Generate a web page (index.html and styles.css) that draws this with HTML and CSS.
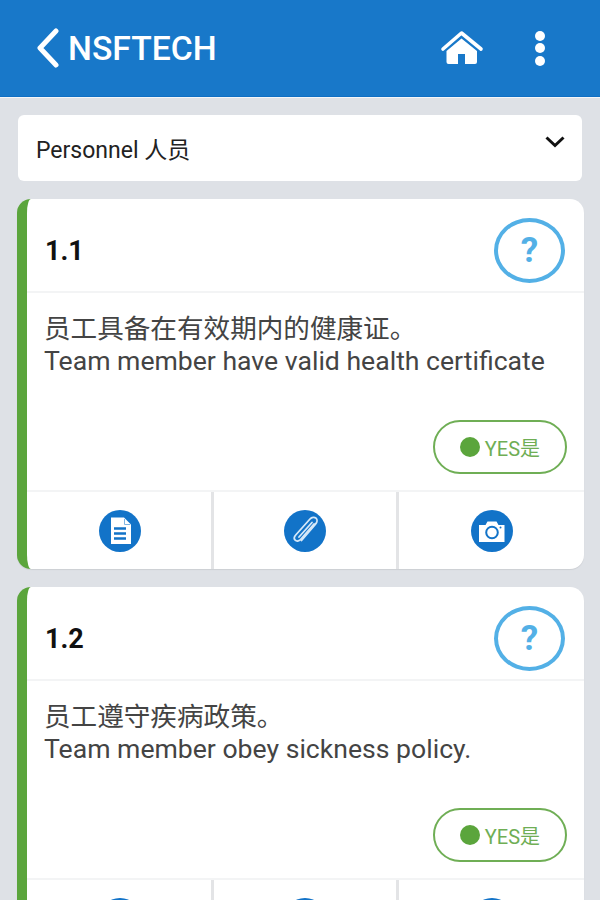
FILE: index.html
```html
<!DOCTYPE html>
<html lang="zh">
<head>
    <meta charset="UTF-8">
    <title>NSFTECH</title>
    <link rel="stylesheet" href="styles.css">
</head>
<body>
    <svg class="defs" width="0" height="0">
        <symbol id="i-doc" viewBox="0 0 42 42">
            <circle cx="21" cy="21" r="21" fill="#1273c8"/>
            <path d="M12 7.500h13l7 7v19.500H12z" fill="#fff"/>
            <path d="M25.500 9v5.500H31" fill="none" stroke="#7fb4e2" stroke-width="1"/>
            <path d="M15 18.500h12M15 23.500h12M15 28.500h12" stroke="#1273c8" stroke-width="2.400"/>
        </symbol>
        <symbol id="i-clip" viewBox="0 0 42 42">
            <circle cx="21" cy="21" r="21" fill="#1273c8"/>
            <path d="M30 14 16.500 29.500c-1.500 1.800-4 2-5.300.700s-1-3.500.500-5.200L26 9c1.800-2 4.500-2.200 6-.800s1.300 4-.500 6L17.500 30.500" fill="none" stroke="#d6e8f8" stroke-width="1.800" stroke-linecap="round"/>
            <path d="M28 12.500 15 27" fill="none" stroke="#d6e8f8" stroke-width="1.800" stroke-linecap="round"/>
        </symbol>
        <symbol id="i-cam" viewBox="0 0 42 42">
            <circle cx="21" cy="21" r="21" fill="#1273c8"/>
            <path d="M8 15h6.500l2-3.500h9l2 3.500H33.500v17H8z" fill="#fff"/>
            <circle cx="21" cy="22.500" r="5.800" fill="none" stroke="#1273c8" stroke-width="2"/>
            <circle cx="29.500" cy="17.500" r="1" fill="#1273c8"/>
        </symbol>
    </svg>

    <header class="topbar">
        <div class="brand">
            <svg class="back" viewBox="0 0 26 40" width="26" height="40"><path d="M21 3 5 20l16 17" fill="none" stroke="#fff" stroke-width="5" stroke-linecap="round" stroke-linejoin="round"/></svg>
            <span>NSFTECH</span>
        </div>
        <div class="actions">
            <svg class="home" viewBox="0 0 44 38" width="44" height="38">
                <path d="M3 20 21.500 4 41 20" fill="none" stroke="#fff" stroke-width="3.600" stroke-linecap="round" stroke-linejoin="round"/>
                <path d="M6.500 22 21.500 9.500 37 22v11a2 2 0 0 1-2 2H25V25h-7v10H8.500a2 2 0 0 1-2-2z" fill="#fff"/>
            </svg>
            <div class="dots"><i></i><i></i><i></i></div>
        </div>
    </header>

    <main class="content">
        <div class="picker">
            <span>Personnel 人员</span>
            <svg viewBox="0 0 20 12" width="20" height="12"><path d="M1.500 1.500 10 9.500l8.500-8" fill="none" stroke="#111" stroke-width="3"/></svg>
        </div>

        <section class="card">
            <div class="card-head"><b>1.1</b><span class="help">?</span></div>
            <div class="card-body">
                <p>员工具备在有效期内的健康证。<br>Team member have valid health certificate</p>
                <div class="answer"><span class="pill"><i></i>YES是</span></div>
            </div>
            <div class="tools">
                <div><svg width="42" height="42"><use href="#i-doc"/></svg></div>
                <div><svg width="42" height="42"><use href="#i-clip"/></svg></div>
                <div><svg width="42" height="42"><use href="#i-cam"/></svg></div>
            </div>
        </section>

        <section class="card">
            <div class="card-head"><b>1.2</b><span class="help">?</span></div>
            <div class="card-body">
                <p>员工遵守疾病政策。<br>Team member obey sickness policy.</p>
                <div class="answer"><span class="pill"><i></i>YES是</span></div>
            </div>
            <div class="tools">
                <div><svg width="42" height="42"><use href="#i-doc"/></svg></div>
                <div><svg width="42" height="42"><use href="#i-clip"/></svg></div>
                <div><svg width="42" height="42"><use href="#i-cam"/></svg></div>
            </div>
        </section>
    </main>
</body>
</html>
```

FILE: styles.css
```css
body { margin: 0; height: 900px; overflow: hidden; background-color: #dee1e6; font-family: Roboto, "Noto Sans CJK SC", sans-serif; }
.defs { display: block; height: 0; }

.topbar { height: 97px; box-sizing: border-box; background-color: #1878c9; border-bottom: 1px solid #0f6fc4; box-shadow: 0 1px 0 #f4f6f8; display: flex; align-items: center; justify-content: space-between; padding: 0 55px 0 35px; }
.brand { display: flex; align-items: center; gap: 7px; color: #fff; font-size: 33.700px; font-weight: 500; }
.back { display: block; }
.actions { display: flex; align-items: center; gap: 51px; }
.home { display: block; }
.dots { display: flex; flex-direction: column; gap: 2.5px; }
.dots i { display: block; width: 10px; height: 10px; border-radius: 50%; background-color: #fff; }

.content { padding: 18px 18px 0 18px; }
.picker { height: 66px; background-color: #fff; border-radius: 6px; display: flex; justify-content: space-between; align-items: center; padding: 0 17px 0 18px; font-size: 23px; color: #222; margin-bottom: 18px; }
.picker svg { margin-bottom: 13px; }

.card { background-color: #fff; border-left: 10px solid #5ba53c; border-radius: 14px; margin: 0 -2px 18px -1px; box-shadow: 0 1px 1px rgba(0, 0, 0, 0.08); }
.card-head { height: 94px; box-sizing: border-box; border-bottom: 2px solid #f3f4f5; display: flex; align-items: center; justify-content: space-between; padding: 11px 19px 0 18px; }
.card-head b { font-size: 27px; font-weight: 700; color: #111; }
.help { width: 71px; height: 65px; margin-top: -1px; box-sizing: border-box; border: 4px solid #53b0e6; border-radius: 50%; color: #53b0e6; font-size: 35px; font-weight: 700; display: flex; align-items: center; justify-content: center; }

.card-body { height: 199px; box-sizing: border-box; border-bottom: 2px solid #f3f4f5; padding: 20px 17px 0 17px; display: flex; flex-direction: column; justify-content: space-between; }
.card-body p { margin: 0; font-size: 26.600px; line-height: 32px; color: #444; }
.answer { display: flex; justify-content: flex-end; padding-bottom: 16px; }
.pill { width: 134px; height: 54px; box-sizing: border-box; border: 2px solid #6fae55; border-radius: 27px; display: flex; align-items: center; justify-content: center; gap: 5px; color: #6fae55; font-size: 20px; }
.pill i { display: block; width: 20px; height: 20px; border-radius: 50%; background-color: #5ba53c; }

.tools { height: 77px; display: flex; }
.tools div { display: flex; align-items: center; justify-content: center; box-sizing: border-box; width: 185px; border-left: 3px solid #e3e4e6; }
.tools div:first-child { width: 184px; padding-left: 2px; border-left: 0; }
.tools div:last-child { width: 188px; }
.tools svg { display: block; }
```
